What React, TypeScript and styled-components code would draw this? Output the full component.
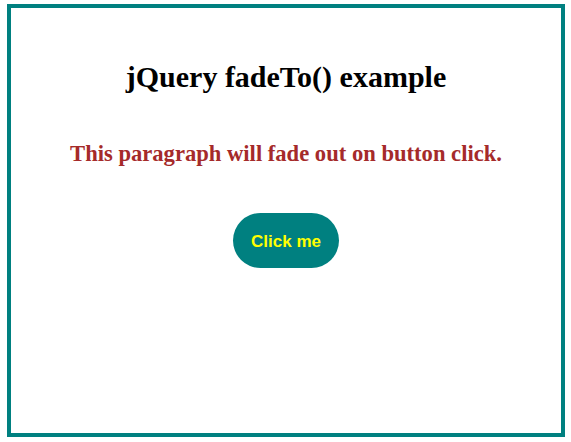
import styled, { createGlobalStyle } from 'styled-components';

const GlobalStyle = createGlobalStyle`
  html, body {
    margin: 0;
    padding: 0;
    background: #fff;
  }
`;

const Page = styled.div`
  padding: 4px 6px 5px 7px;
`;

const Frame = styled.div`
  box-sizing: border-box;
  width: 558px;
  height: 433px;
  border: 4px solid #008080;
  display: flex;
  flex-direction: column;
  align-items: center;
  font-family: 'Liberation Serif', 'Times New Roman', serif;
`;

const Title = styled.h1`
  margin: 52px 0 0;
  font-size: 30px;
  font-weight: bold;
  color: #000;
`;

const Note = styled.p`
  margin: 47px 0 0;
  font-size: 22.6px;
  font-weight: bold;
  color: #a52a2a;
`;

const FadeButton = styled.button`
  margin-top: 46px;
  width: 106px;
  height: 55px;
  padding: 2px 0 0;
  border: none;
  border-radius: 28px;
  background: #008080;
  color: #ffff00;
  font-family: 'Liberation Sans', Arial, sans-serif;
  font-size: 17px;
  font-weight: bold;
  cursor: pointer;
`;

const App = () => {
  return (
    <>
      <GlobalStyle />
      <Page>
        <Frame>
          <Title>jQuery fadeTo() example</Title>
          <Note>This paragraph will fade out on button click.</Note>
          <FadeButton>Click me</FadeButton>
        </Frame>
      </Page>
    </>
  );
};

export default App;
